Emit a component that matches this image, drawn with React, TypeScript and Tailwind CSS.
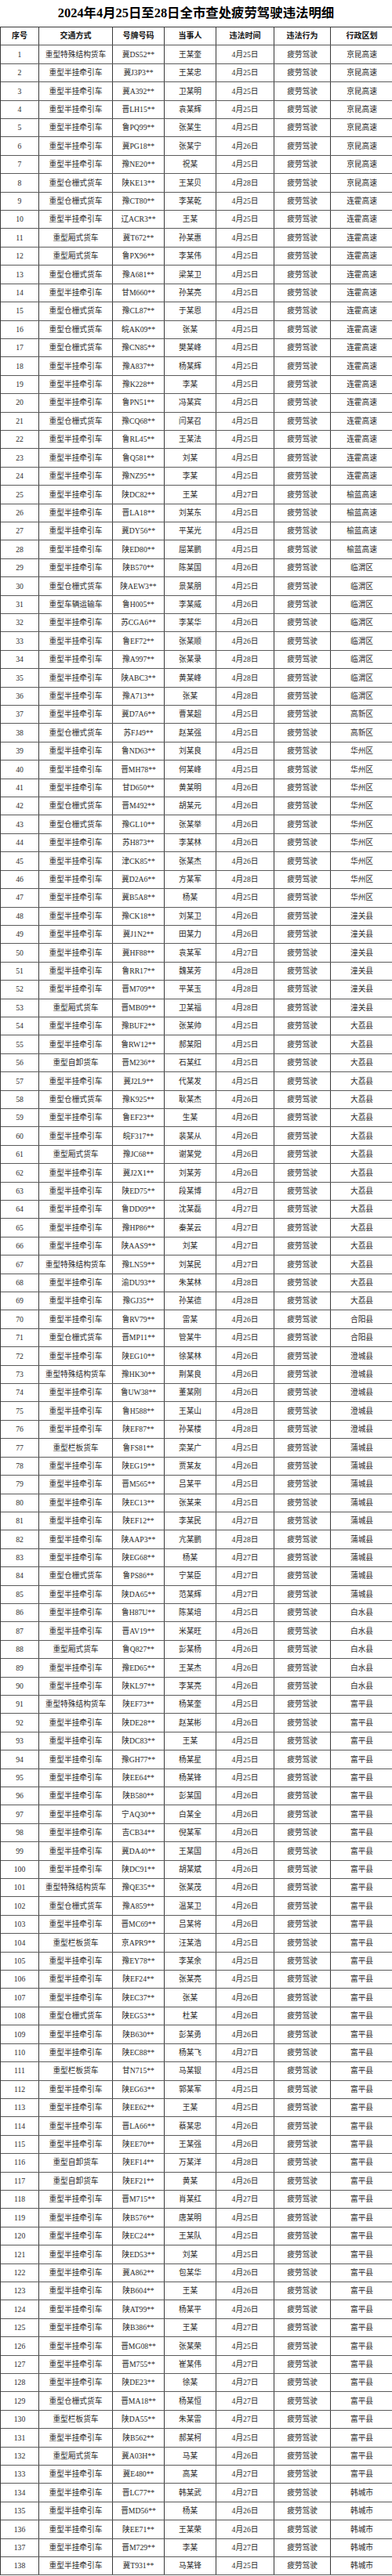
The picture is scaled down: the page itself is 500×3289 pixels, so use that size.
const TYPES: Record<string, string> = {
  A: "重型半挂牵引车",
  B: "重型仓栅式货车",
  C: "重型特殊结构货车",
  D: "重型厢式货车",
  E: "重型车辆运输车",
  F: "重型自卸货车",
  G: "重型栏板货车",
};

// type plate name day region
const DATA = `C 冀DS52** 王某奎 25 京昆高速
A 冀J3P3** 王某忠 25 京昆高速
A 冀A392** 卫某明 25 京昆高速
A 晋LH15** 袁某辉 25 京昆高速
A 鲁PQ99** 张某生 25 京昆高速
A 冀PG18** 张某宁 26 京昆高速
A 豫NE20** 祝某 25 京昆高速
B 陕KE13** 王某贝 28 京昆高速
B 豫CT80** 李某乾 25 连霍高速
A 辽ACR3** 王某 25 连霍高速
D 冀T672** 孙某惠 25 连霍高速
D 鲁PX96** 李某伟 25 连霍高速
B 豫A681** 梁某卫 25 连霍高速
A 甘M660** 孙某亮 25 连霍高速
B 豫CL87** 于某恩 25 连霍高速
B 皖AK09** 张某 25 连霍高速
B 豫CN85** 樊某峰 25 连霍高速
A 豫A837** 杨某辉 25 连霍高速
A 豫K228** 李某 25 连霍高速
A 鲁PN51** 冯某宾 25 连霍高速
B 豫CQ68** 闫某召 25 连霍高速
A 鲁RL45** 王某法 25 连霍高速
A 鲁Q581** 刘某 25 连霍高速
A 豫NZ95** 李某 25 连霍高速
A 陕DC82** 王某 27 榆蓝高速
A 晋LA18** 刘某东 25 榆蓝高速
A 冀DY56** 平某光 25 榆蓝高速
A 陕ED80** 屈某鹏 25 榆蓝高速
A 陕B570** 陈某国 26 临渭区
B 陕AEW3** 景某朋 25 临渭区
E 鲁H005** 李某威 26 临渭区
A 苏CGA6** 李某华 26 临渭区
A 鲁EF72** 张某顺 26 临渭区
A 豫A997** 张某录 28 临渭区
A 陕ABC3** 黄某峰 28 临渭区
A 豫A713** 张某 28 临渭区
A 冀D7A6** 曹某超 25 高新区
B 苏FJ49** 赵某强 25 高新区
A 鲁ND63** 刘某良 25 华州区
A 晋MH78** 何某峰 25 华州区
A 甘D650** 黄某明 26 华州区
B 晋M492** 胡某元 26 华州区
B 豫GL10** 张某举 26 华州区
A 苏H873** 李某林 26 华州区
A 津CK85** 张某杰 26 华州区
A 冀D2A6** 方某军 28 华州区
A 冀B5A8** 杨某 25 华州区
A 豫CK18** 刘某卫 26 潼关县
A 冀J1N2** 田某力 26 潼关县
A 冀HF88** 袁某军 27 潼关县
A 鲁RR17** 魏某芳 28 潼关县
A 晋M709** 平某玉 28 潼关县
D 晋MB09** 卫某福 28 潼关县
A 豫BUF2** 张某帅 25 大荔县
A 鲁RW12** 郝某阳 25 大荔县
F 晋M236** 石某红 25 大荔县
A 冀J2L9** 代某发 25 大荔县
B 豫K925** 耿某杰 26 大荔县
A 鲁EF23** 生某 26 大荔县
A 皖F317** 裴某从 26 大荔县
D 豫JC68** 谢某党 26 大荔县
A 冀J2X1** 刘某芳 26 大荔县
A 陕ED75** 段某博 27 大荔县
A 鲁DD09** 沈某磊 27 大荔县
A 豫HP86** 秦某云 27 大荔县
A 陕AAS9** 刘某 27 大荔县
C 豫LN59** 刘某民 27 大荔县
A 渝DU93** 朱某林 28 大荔县
A 豫GJ35** 孙某德 28 大荔县
A 鲁RV79** 雷某 26 合阳县
B 晋MP11** 管某牛 25 合阳县
A 陕EG10** 徐某林 26 澄城县
C 豫HK30** 荆某良 26 澄城县
A 鲁UW38** 董某刚 26 澄城县
A 鲁H588** 王某山 28 澄城县
A 陕EF87** 孙某楼 28 澄城县
G 鲁FS81** 栾某广 25 蒲城县
A 陕EG19** 贾某友 26 蒲城县
A 晋M565** 吕某平 25 蒲城县
A 陕EC13** 张某来 25 蒲城县
A 陕EF12** 李某民 27 蒲城县
A 陕AAP3** 亢某鹏 28 蒲城县
A 陕EG68** 杨某 27 蒲城县
B 鲁PS86** 宁某臣 27 蒲城县
A 陕DA65** 范某辉 27 蒲城县
A 鲁H87U** 陈某培 25 白水县
A 晋AV19** 米某旺 26 白水县
D 鲁Q827** 彭某杨 26 白水县
A 豫ED65** 王某杰 26 白水县
A 陕KL97** 李某亮 26 白水县
C 陕EF73** 杨某奎 25 富平县
A 陕DE28** 赵某彬 26 富平县
A 陕DC83** 王某 25 富平县
A 豫GH77** 杨某星 25 富平县
A 陕EE64** 杨某锋 25 富平县
A 陕B580** 彭某国 26 富平县
A 宁AQ30** 白某全 26 富平县
A 吉CB34** 倪某军 26 富平县
A 冀DA40** 王某国 26 富平县
A 陕DC91** 胡某斌 26 富平县
C 豫QE35** 张某茂 26 富平县
B 豫A859** 温某卫 26 富平县
A 晋MC69** 吕某将 26 富平县
G 京APR9** 汪某浩 25 富平县
A 豫EY78** 李某余 25 富平县
A 陕EF24** 张某亮 25 富平县
A 陕EC37** 张某 26 富平县
B 陕EG53** 杜某 26 富平县
A 陕B630** 彭某勇 26 富平县
A 陕EC88** 杨某飞 27 富平县
G 甘N715** 马某银 25 富平县
A 陕EG63** 郭某军 25 富平县
A 陕EE62** 王某 25 富平县
A 晋LA66** 蔡某忠 26 富平县
A 陕EE70** 王某强 26 富平县
F 陕EF14** 万某洋 28 富平县
F 陕EF21** 黄某 26 富平县
A 晋M715** 肖某红 27 富平县
A 陕B576** 唐某明 25 富平县
A 陕EC24** 王某队 25 富平县
A 陕ED53** 刘某 25 富平县
A 冀A862** 包某华 26 富平县
A 陕B604** 王某 26 富平县
A 陕AT99** 杨某平 26 富平县
A 陕B386** 王某 27 富平县
A 晋MG08** 张某荣 25 富平县
A 晋M755** 崔某伟 27 富平县
A 陕DE23** 徐某 27 富平县
B 晋MA18** 杨某恒 27 富平县
G 陕DA55** 朱某雷 27 富平县
A 陕B562** 郝某柯 25 富平县
D 冀A03H** 马某 26 富平县
A 冀E480** 高某 27 富平县
A 晋LC77** 韩某武 27 韩城市
A 晋MD56** 杨某 26 韩城市
A 陕EE71** 王某荣 26 韩城市
A 晋M729** 李某 27 韩城市
A 冀T931** 马某锋 25 韩城市`;

const rows = DATA.split("\n").map((line) => line.split(" "));

const HEAD = ["序号", "交通方式", "号牌号码", "当事人", "违法时间", "违法行为", "行政区划"];

const Row = ({ cells, head }: { cells: string[]; head?: boolean }) => (
  <div
    className={`grid h-[23.41px] grid-cols-[49px_94px_66px_66px_74px_72px_79px] border-b border-[#5a5a5a] ${
      head ? "text-[10px] font-bold text-[#111]" : "text-[9.7px] text-[#2a2a2a]"
    }`}
  >
    {cells.map((c, i) => (
      <div
        key={i}
        className={`flex items-center justify-center whitespace-nowrap ${i < 6 ? "border-r border-[#3a3a3a]" : ""}`}
      >
        {c}
      </div>
    ))}
  </div>
);

export default function App() {
  return (
    <div className="w-[500px] bg-white font-['Liberation_Serif','Noto_Sans_CJK_SC',serif] leading-none">
      <div className="flex h-[34px] items-center justify-center text-[16.4px] font-bold text-black">
        2024年4月25日至28日全市查处疲劳驾驶违法明细
      </div>
      <div className="border-t border-l border-[#3a3a3a]">
        <Row cells={HEAD} head />
        {rows.map(([t, plate, name, day, region], i) => (
          <Row
            key={i}
            cells={[String(i + 1), TYPES[t], plate, name, `4月${day}日`, "疲劳驾驶", region]}
          />
        ))}
      </div>
    </div>
  );
}
